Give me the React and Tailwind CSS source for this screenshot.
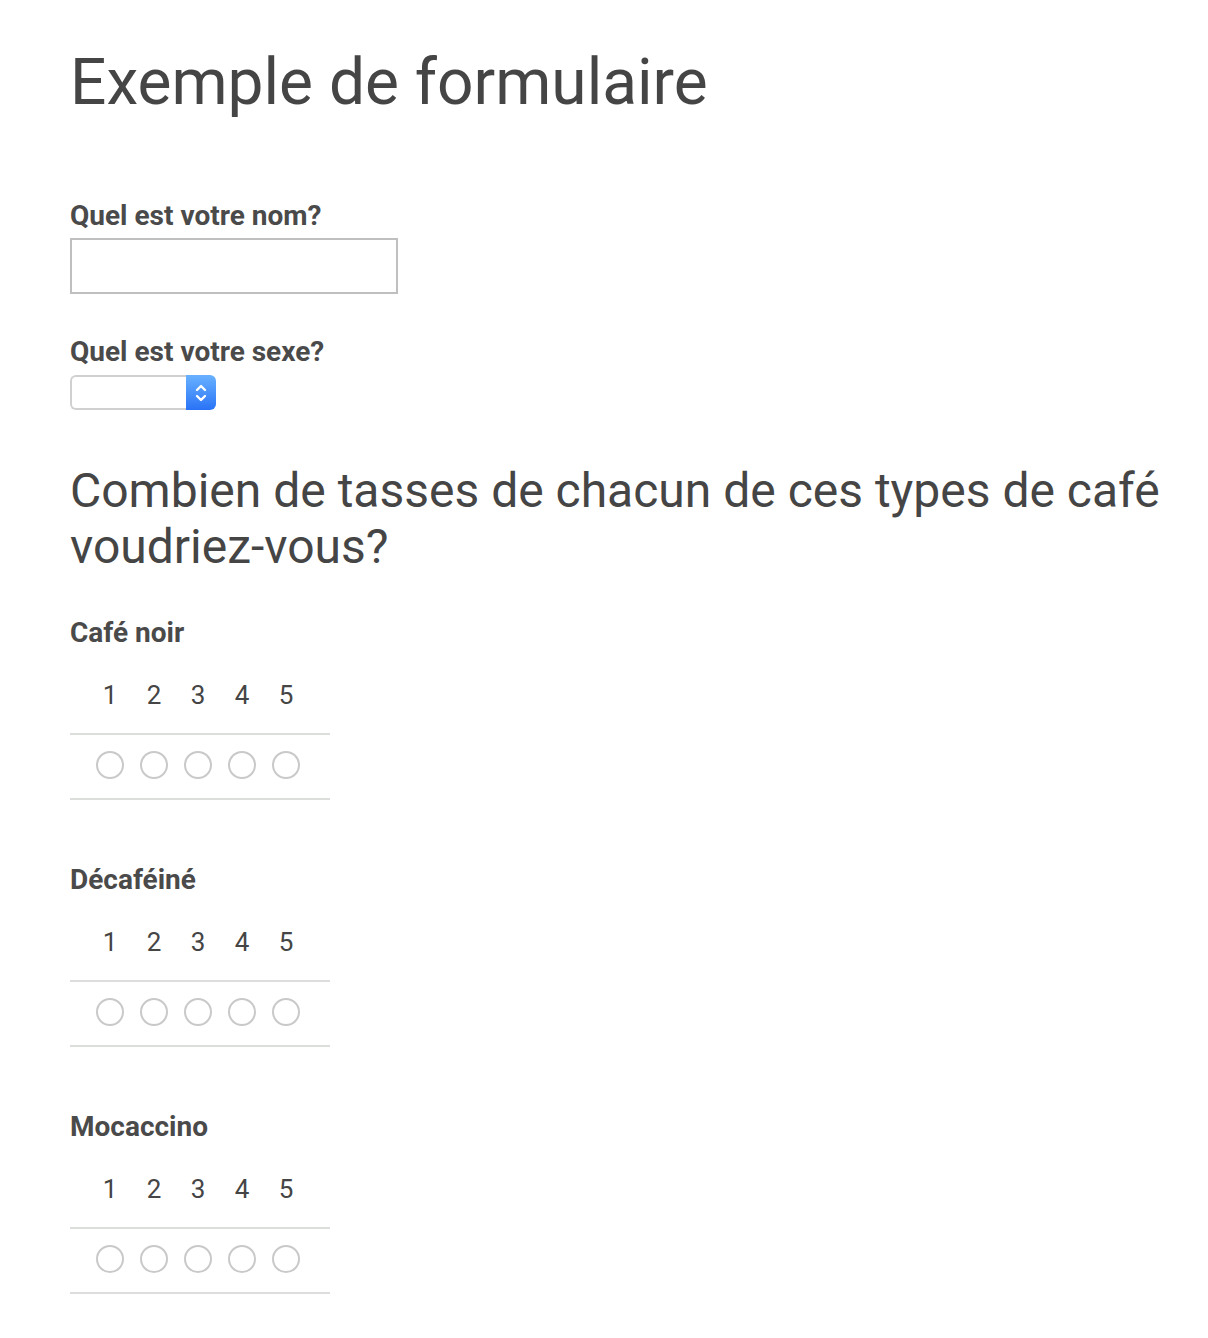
import React from 'react';

const coffees = ['Café noir', 'Décaféiné', 'Mocaccino'];
const scale = [1, 2, 3, 4, 5];

const RatingTable = ({ name }) => (
    <div className="w-[260px] mt-[31px]">
        <div className="flex pl-[18px] pb-[23px] border-b-2 border-[#dcdedc]">
            {scale.map((n) => (
                <span key={n} className="w-[44px] text-center text-[26px] leading-[30px] text-[#454545]">
                    {n}
                </span>
            ))}
        </div>
        <div className="flex pl-[18px] pt-[16px] pb-[19px] border-b-2 border-[#dcdedc]">
            {scale.map((n) => (
                <div key={n} className="w-[44px] flex justify-center">
                    <input
                        type="radio"
                        name={name}
                        value={n}
                        className="appearance-none w-[28px] h-[28px] rounded-full border-2 border-[#c9c9c9] bg-white"
                    />
                </div>
            ))}
        </div>
    </div>
);

const FakeSelect = () => (
    <div className="flex w-[146px] h-[35px] mt-[7px]">
        <div className="flex-1 rounded-l-[6px] border-2 border-r-0 border-[#d0d0d0] bg-white"></div>
        <div className="w-[30px] rounded-r-[6px] bg-gradient-to-b from-[#69b1ff] to-[#2a72f6] flex items-center justify-center">
            <svg width="14" height="22" viewBox="0 0 14 22" fill="none" stroke="white" strokeWidth="2.4" strokeLinecap="round" strokeLinejoin="round">
                <path d="M3 8 L7 4 L11 8" />
                <path d="M3 14 L7 18 L11 14" />
            </svg>
        </div>
    </div>
);

const App = () => {
    return (
        <div className="min-h-[1338px] bg-white pl-[70px] pr-[20px] pt-[47px] pb-[40px] font-['Roboto',_'Liberation_Sans',_sans-serif] text-[#454545]">
            <h1 className="text-[64px] leading-[72px] font-normal">Exemple de formulaire</h1>

            <label className="block mt-[81px] text-[28px] leading-[32px] font-bold text-[#4a4a4a]">Quel est votre nom?</label>
            <input type="text" className="block mt-[6px] w-[328px] h-[56px] border-2 border-[#bfbfbf] bg-white outline-none" />

            <label className="block mt-[42px] text-[28px] leading-[32px] font-bold text-[#4a4a4a]">Quel est votre sexe?</label>
            <FakeSelect />

            <h2 className="mt-[53px] text-[48px] leading-[56px] font-normal">
                Combien de tasses de chacun de ces types de café voudriez-vous?
            </h2>

            <div className="mt-[42px]">
                {coffees.map((c, i) => (
                    <div key={c} className={i > 0 ? 'mt-[64px]' : ''}>
                        <div className="text-[28px] leading-[32px] font-bold text-[#4a4a4a]">{c}</div>
                        <RatingTable name={'coffee' + i} />
                    </div>
                ))}
            </div>
        </div>
    );
};

export default App;
